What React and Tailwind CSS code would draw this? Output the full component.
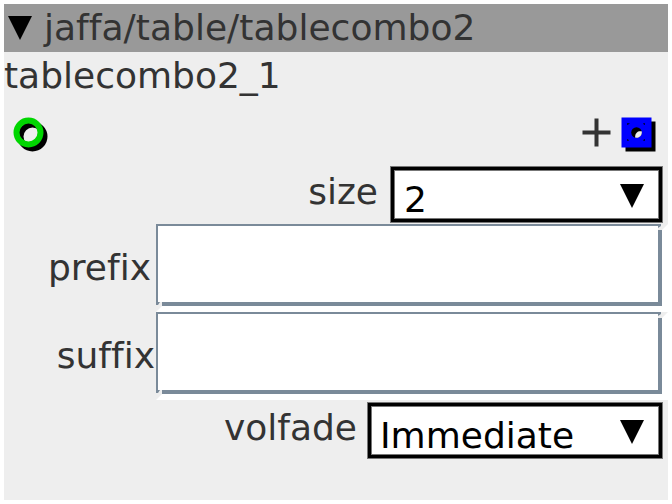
import React, { useState } from "react";

const Arrow = () => (
  <svg width="24" height="24" viewBox="0 0 24 24" className="shrink-0">
    <path d="M0 0H24L12 24Z" fill="#000" />
  </svg>
);

const Combo = ({ value, className, textClass }) => (
  <button
    type="button"
    className={`shrink-0 h-[57px] border border-[#777] text-black ${className}`}
  >
    <span className="flex h-full border-[3px] border-black">
      <span className="flex w-full items-start justify-between border border-[#777] bg-white pr-[14px]">
        <span className={`mt-[5px] leading-[48px] ${textClass}`}>{value}</span>
        <span className="mt-[13px] flex">
          <Arrow />
        </span>
      </span>
    </span>
  </button>
);

const TextField = ({ name }) => {
  const [text, setText] = useState("");

  return (
    <div className="relative w-[512px] h-[88px] shrink-0 bg-white">
      <input
        name={name}
        value={text}
        onChange={(e) => setText(e.target.value)}
        className="block w-[506px] h-[82px] bg-white border-[#7a8a99] border-t-2 border-l-2 border-r-4 border-b-4 px-2 outline-none"
      />
      {/* bevel corners */}
      <svg width="12" height="8" className="absolute right-0 top-0">
        <path d="M5 0H12L6 6H2V4L5 2Z" fill="#eee" />
      </svg>
      <svg width="8" height="12" className="absolute left-0 bottom-0">
        <path d="M0 5H2L4 2H6V6L0 12Z" fill="#eee" />
      </svg>
    </div>
  );
};

const Inlet = () => (
  <svg width="40" height="40" viewBox="0 0 40 40" fill="none" strokeWidth="6">
    <circle cx="24.5" cy="24.5" r="12" stroke="#000" />
    <circle cx="20.5" cy="20.5" r="12" stroke="#00d600" />
  </svg>
);

const Outlet = () => (
  <svg width="36" height="36" viewBox="0 0 36 36">
    <path d="M4.5 4.5H34.5V34.5H4.5Z" fill="#000" />
    <path d="M0.5 0.5H30.5V30.5H0.5Z" fill="#0000ff" />
    <circle cx="15.5" cy="15.5" r="5.3" fill="#000" />
    <path
      d="M14.3 20.7A5.3 5.3 0 0 1 20.7 14.3A5.3 5.3 0 0 1 14.3 20.7Z"
      fill="#eee"
    />
    <path
      d="M6 6h3l-2 2h-1zM22 6h2v2h-1zM6 22h1l1 2h-2zM23 22h1v2h-2z"
      fill="#000055"
    />
  </svg>
);

const App = () => {
  return (
    <div className="w-[672px] h-[504px] bg-white p-1 overflow-hidden text-[36px] leading-[48px] text-[#333] font-['DejaVu_Sans',sans-serif] [font-variant-ligatures:none]">
      <div className="h-full bg-[#eee] flex flex-col">
        {/* Title bar */}
        <div className="h-12 shrink-0 bg-[#999] flex pl-1">
          <span className="mt-3 flex">
            <Arrow />
          </span>
          <span className="ml-3 tracking-[0.03px]">jaffa/table/tablecombo2</span>
        </div>
        <div className="h-12 shrink-0">tablecombo2_1</div>

        {/* Inlet and outlet */}
        <div className="h-[62px] shrink-0 flex justify-between pl-1 pr-[11px] pt-[12px]">
          <Inlet />
          <div className="flex gap-[10px] mt-[5px]">
            <svg width="29" height="30" viewBox="0 0 29 30">
              <path
                d="M14.5 1.5V29.5M0.5 15.5H28.5"
                stroke="#333"
                strokeWidth="4"
              />
            </svg>
            <Outlet />
          </div>
        </div>

        <div className="h-[62px] shrink-0 flex justify-end pt-[4px] pr-[5px]">
          <span className="mt-[2px] mr-3">size</span>
          <Combo value="2" className="w-[273px]" textClass="pl-[9px]" />
        </div>
        <div className="h-[88px] shrink-0 flex justify-end">
          <span className="mt-5 mr-[5px]">prefix</span>
          <TextField name="prefix" />
        </div>
        <div className="h-[88px] shrink-0 flex justify-end">
          <span className="mt-5 mr-px">suffix</span>
          <TextField name="suffix" />
        </div>
        <div className="flex justify-end pt-[2px] pr-[5px]">
          <span className="mt-[2px] mr-[10px]">volfade</span>
          <Combo
            value="Immediate"
            className="w-[296px]"
            textClass="pl-[8px]"
          />
        </div>
      </div>
    </div>
  );
};

export default App;
